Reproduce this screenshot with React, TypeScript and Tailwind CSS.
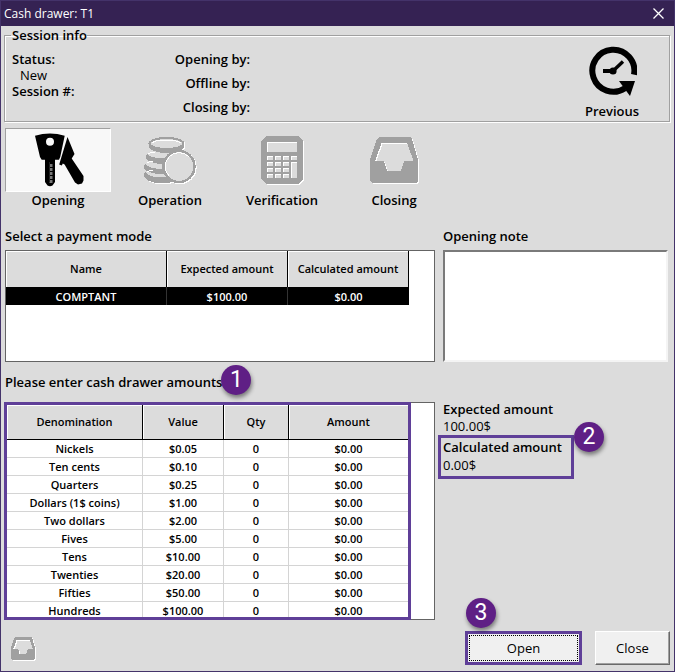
import React from "react";

type Row = { name: string; value: string };

const denominations: Row[] = [
  { name: "Nickels", value: "$0.05" },
  { name: "Ten cents", value: "$0.10" },
  { name: "Quarters", value: "$0.25" },
  { name: "Dollars (1$ coins)", value: "$1.00" },
  { name: "Two dollars", value: "$2.00" },
  { name: "Fives", value: "$5.00" },
  { name: "Tens", value: "$10.00" },
  { name: "Twenties", value: "$20.00" },
  { name: "Fifties", value: "$50.00" },
  { name: "Hundreds", value: "$100.00" },
];

function ClockIcon() {
  return (
    <svg width="50" height="50" viewBox="-1 0 50 50" aria-hidden="true">
      <path d="M46 28.6 A21 21 0 1 0 37 42.2" fill="none" stroke="#000" strokeWidth="6" />
      <path d="M31 35 H47 L42 50 L37.5 44 Z" />
      <circle cx="25" cy="25" r="3.6" />
      <path d="M25 25 H15" stroke="#000" strokeWidth="4" />
      <path d="M25 25 L35 15.5" stroke="#000" strokeWidth="3.4" />
    </svg>
  );
}

function KeysIcon() {
  return (
    <svg width="52" height="56" viewBox="0 0 52 56" aria-hidden="true">
      <path
        fillRule="evenodd"
        d="M2 3.7 Q17 -0.6 31.7 3.7 L27.2 25 L26 27.7 H22 V50 L19.5 53.6 Q17 55 14.5 53.6 L12 50 V27.7 H8.7 L7 25 Z M21 9.7 A4 4 0 1 0 13 9.7 A4 4 0 1 0 21 9.7 Z"
      />
      <path d="M18 32 V52" stroke="#777" strokeWidth="3" strokeDasharray="3 1" />
      <path d="M16.5 30 V50" stroke="#222" strokeWidth="1" />
      <path d="M34.5 5 L41.5 22 L38.7 26.5 L50.5 44 V48.5 L49 51.5 L45 52.5 L42 50.5 L31.6 32.4 L29.8 31.5 L28.8 33.4 L26.2 32.5 Z" />
    </svg>
  );
}

function CoinShape({ color, paper }: { color: string; paper: string }) {
  return (
    <g>
      <ellipse cx="19" cy="40" rx="18" ry="8.5" fill={color} />
      <ellipse cx="19" cy="37" rx="16" ry="5.5" fill={paper} />
      <ellipse cx="19" cy="32" rx="18" ry="7" fill={color} />
      <ellipse cx="19" cy="28.5" rx="16" ry="5.5" fill={paper} />
      <ellipse cx="21" cy="22" rx="18.5" ry="7" fill={color} />
      <ellipse cx="21" cy="18.5" rx="16.5" ry="5" fill={paper} />
      <ellipse cx="23.5" cy="11" rx="18" ry="7" fill={color} />
      <ellipse cx="23.5" cy="8.5" rx="18" ry="6.5" fill={color} />
      <ellipse cx="23.5" cy="8.5" rx="15.5" ry="4.5" fill={paper} />
      <circle cx="36" cy="31.5" r="15.5" fill={paper} stroke={color} strokeWidth="2.4" />
    </g>
  );
}

function CoinsIcon() {
  return (
    <svg width="54" height="50" viewBox="0 0 54 50" shapeRendering="crispEdges" aria-hidden="true">
      <g transform="translate(1 1)">
        <CoinShape color="#fff" paper="#dcdcdc" />
      </g>
      <CoinShape color="#a0a0a0" paper="#dcdcdc" />
      <path d="M9 8 Q12 5 23 5 T38 8" fill="none" stroke="#fff" />
      <path d="M5 19 Q8 17 12 17 M4 28 Q6 26 10 26 M4 37 Q6 35 10 35" fill="none" stroke="#fff" />
      <circle cx="36" cy="31.5" r="13.8" fill="none" stroke="#fff" strokeWidth="1" strokeDasharray="43 44" transform="rotate(135 36 31.5)" />
    </svg>
  );
}

const calculatorPath =
  "M5 0 H37 L42 5 V43 L37 48 H5 L0 43 V5 Z M6 6 V16 H36 V6 Z" +
  " M6 20 V24 H12 V20 Z M14 20 V24 H20 V20 Z M22 20 V24 H28 V20 Z M30 20 V24 H36 V20 Z" +
  " M6 26 V30 H12 V26 Z M14 26 V30 H20 V26 Z M22 26 V30 H28 V26 Z M30 26 V42 H36 V26 Z" +
  " M6 32 V36 H12 V32 Z M14 32 V36 H20 V32 Z M22 32 V36 H28 V32 Z" +
  " M6 38 V42 H12 V38 Z M14 38 V42 H20 V38 Z M22 38 V42 H28 V38 Z";

const trayPath =
  "M9 1 H40 L42 3 L48 24 V45 L46 47 H2 L0 45 V24 L7 3 Z" +
  " M11.5 7 L5 25 H14 L17 35 H31 L34 25 H43.5 L37 7 Z";

function EmbossedIcon({ path, width, height, box }: { path: string; width: number; height: number; box: string }) {
  return (
    <svg width={width} height={height} viewBox={box} shapeRendering="crispEdges" aria-hidden="true">
      <path d={path} fill="#fff" fillRule="evenodd" transform={width < 30 ? "translate(2 2)" : "translate(1 1)"} />
      <path d={path} fill="#a0a0a0" fillRule="evenodd" />
    </svg>
  );
}

function Step({ label, active, children }: { label: string; active?: boolean; children: React.ReactNode }) {
  return (
    <button type="button" className="flex w-[106px] flex-col items-center font-semibold">
      <span
        className={
          active
            ? "flex h-16 w-full items-center justify-center border border-t-[#a0a0a0] border-r-white border-b-white border-l-[#a0a0a0] bg-[#f8f8f8] pl-[2px]"
            : "flex h-16 w-full items-center justify-center"
        }
      >
        {children}
      </span>
      {label}
    </button>
  );
}

function Badge({ n, place }: { n: number; place: string }) {
  return (
    <span
      className={`absolute flex size-[30px] items-center justify-center rounded-full bg-[#5f1f85] font-[Roboto,sans-serif] text-[23px] font-normal text-white shadow-[1px_3px_4px_rgba(0,0,0,0.45)] ${place}`}
    >
      {n}
    </span>
  );
}

const head = "border-r border-r-black bg-[#dcdcdc] p-0 font-semibold shadow-[inset_1px_1px_0_#fff]";
const cell = "border-r border-b border-[#d4d4d4] p-0";

export default function App() {
  return (
    <div className="flex min-h-screen w-full flex-col border border-[#44336a] bg-[#dcdcdc] font-['Open_Sans','Noto_Sans',sans-serif] text-[13px] leading-4 text-black">
      <header className="flex h-[25px] items-center justify-between bg-[#352253] pr-[6px] pl-[3px] text-white">
        <h1 className="text-xs">Cash drawer: T1</h1>
        <button type="button" aria-label="Close window" className="p-1">
          <svg width="11" height="11" viewBox="0 0 11 11" aria-hidden="true">
            <path d="M0.5 0.5 L10.5 10.5 M10.5 0.5 L0.5 10.5" stroke="#fff" strokeWidth="1.3" />
          </svg>
        </button>
      </header>

      <main className="flex flex-1 flex-col pr-1 pl-1">
        <fieldset className="-ml-px border border-[#a0a0a0] font-semibold shadow-[1px_1px_0_#fff,inset_1px_1px_0_#fff]">
          <legend className="ml-[6px] pl-px leading-[18px]">Session info</legend>
          <div className="flex justify-between pr-[26px] pb-[2px] pl-[7px]">
            <div className="flex pt-[7px]">
              <dl className="w-[120px]">
                <dt>Status:</dt>
                <dd className="pl-2 font-normal">New</dd>
                <dt>Session #:</dt>
              </dl>
              <dl className="flex w-[118px] flex-col gap-2 text-right">
                <dt>Opening by:</dt>
                <dt>Offline by:</dt>
                <dt>Closing by:</dt>
              </dl>
            </div>
            <button type="button" className="flex w-[62px] flex-col items-center gap-[7px] pt-[2px] font-semibold">
              <ClockIcon />
              Previous
            </button>
          </div>
        </fieldset>

        <nav className="mt-[6px] flex gap-[6px]">
          <Step label="Opening" active>
            <KeysIcon />
          </Step>
          <Step label="Operation">
            <CoinsIcon />
          </Step>
          <Step label="Verification">
            <EmbossedIcon path={calculatorPath} width={43} height={49} box="0 0 43 49" />
          </Step>
          <Step label="Closing">
            <EmbossedIcon path={trayPath} width={49} height={49} box="0 0 49 49" />
          </Step>
        </nav>

        <div className="mt-5 flex gap-2 pr-[2px]">
          <section className="flex min-w-0 flex-1 flex-col">
            <h2 className="font-semibold">Select a payment mode</h2>
            <div className="mt-[6px] h-28 border border-[#646464] bg-white">
              <table className="w-[403px] table-fixed border-separate border-spacing-0 text-center text-[11px] font-semibold">
                <thead>
                  <tr className="h-9">
                    <th className={`w-[161px] ${head}`}>Name</th>
                    <th className={`w-[121px] ${head}`}>Expected amount</th>
                    <th className={`w-[121px] ${head}`}>Calculated amount</th>
                  </tr>
                </thead>
                <tbody>
                  <tr className="h-[18px] bg-black text-white">
                    <td className="border-r border-[#333] p-0 pt-px">COMPTANT</td>
                    <td className="border-r border-[#333] p-0 pt-px">$100.00</td>
                    <td className="p-0 pt-px">$0.00</td>
                  </tr>
                </tbody>
              </table>
            </div>
          </section>
          <section className="flex w-[225px] flex-col">
            <label htmlFor="note" className="font-semibold">
              Opening note
            </label>
            <textarea
              id="note"
              className="mt-[6px] h-28 w-full resize-none border-2 border-t-[#7a7a7a] border-r-[#f4f4f4] border-b-[#f4f4f4] border-l-[#7a7a7a] bg-white outline-none"
            />
          </section>
        </div>

        <div className="mt-3 flex">
          <h2 className="relative font-semibold">
            Please enter cash drawer amounts
            <Badge n={1} place="-top-[9px] left-full -ml-px" />
          </h2>
        </div>

        <div className="mt-3 flex gap-[3px]">
          <div className="-ml-px h-[218px] min-w-0 flex-1 border border-l-0 border-[#646464] bg-white">
            <div className="-my-px h-[218px] w-[407px] overflow-hidden border-3 border-[#5f3f98]">
              <table className="w-full table-fixed border-separate border-spacing-0 text-center text-[11px] font-semibold">
                <thead>
                  <tr className="h-[35px]">
                    <th className={`w-[136px] border-b border-b-black ${head}`}>Denomination</th>
                    <th className={`w-[81px] border-b border-b-black ${head}`}>Value</th>
                    <th className={`w-[65px] border-b border-b-black ${head}`}>Qty</th>
                    <th className="border-b border-b-black bg-[#dcdcdc] p-0 font-semibold shadow-[inset_1px_1px_0_#fff]">
                      Amount
                    </th>
                  </tr>
                </thead>
                <tbody>
                  {denominations.map((d) => (
                    <tr key={d.name} className="h-[18px]">
                      <td className={cell}>{d.name}</td>
                      <td className={cell}>{d.value}</td>
                      <td className={cell}>0</td>
                      <td className="border-b border-[#d4d4d4] p-0">$0.00</td>
                    </tr>
                  ))}
                </tbody>
              </table>
            </div>
          </div>
          <dl className="-mt-[2px] w-[232px] leading-[18px]">
            <div className="pl-[5px]">
              <dt className="font-semibold">Expected amount</dt>
              <dd className="pb-px leading-4">100.00$</dd>
            </div>
            <div className="relative w-[136px] border-3 border-[#5f3f98] pb-[2px] pl-[2px]">
              <dt className="font-semibold">Calculated amount</dt>
              <dd>0.00$</dd>
              <Badge n={2} place="-top-4 -right-[33px]" />
            </div>
          </dl>
        </div>

        <footer className="mt-[11px] flex items-center pb-[6px]">
          <button type="button" aria-label="Drawer" className="ml-[6px]">
            <EmbossedIcon path={trayPath} width={25} height={25} box="0 0 50 50" />
          </button>
          <button
            type="button"
            className="relative ml-auto h-[34px] w-[117px] border-3 border-[#5f3f98] bg-[#f0f0f0] p-px"
          >
            <span className="flex h-full items-center justify-center border border-dotted border-black">Open</span>
            <Badge n={3} place="-top-[36px] -left-[2px]" />
          </button>
          <button
            type="button"
            className="ml-[13px] h-[34px] w-[75px] border border-t-white border-r-[#696969] border-b-[#696969] border-l-white bg-[#f0f0f0] shadow-[inset_-1px_-1px_0_#a0a0a0]"
          >
            Close
          </button>
        </footer>
      </main>
    </div>
  );
}
